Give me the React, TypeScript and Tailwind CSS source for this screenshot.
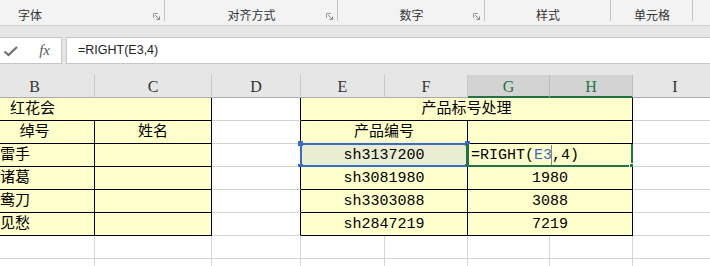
import React from 'react';

const R = { k: 'border-r-black', g: 'border-r-[#d4d4d4]' };
const B = { k: 'border-b-black', g: 'border-b-[#d4d4d4]' };

type Side = 'k' | 'g';

interface CellProps {
  span?: 1 | 2 | 4;
  r?: Side;
  b?: Side;
  fill?: string;
  align?: 'left' | 'center';
  className?: string;
  children?: React.ReactNode;
}

const SPAN = { 1: '', 2: 'col-span-2', 4: 'col-span-4' };

function Cell({ span = 1, r = 'g', b = 'g', fill = 'bg-white', align = 'center', className = '', children }: CellProps) {
  return (
    <div
      className={`relative h-[23px] box-border border-r border-b flex items-end pb-[1px] leading-[18px] whitespace-nowrap ${SPAN[span]} ${R[r]} ${B[b]} ${fill} ${
        align === 'center' ? 'justify-center' : 'justify-start'
      } ${className}`}
    >
      {children}
    </div>
  );
}

function Launcher() {
  return (
    <svg width="8" height="8" viewBox="0 0 8 8" className="absolute right-[4px] bottom-[4px]">
      <path d="M0.5 5 V0.5 H5" fill="none" stroke="#9a9a9a" strokeWidth="1" />
      <path d="M2 2 L6.5 6.5 M6.5 3.5 V6.5 H3.5" fill="none" stroke="#8a8a8a" strokeWidth="1" />
    </svg>
  );
}

function RibbonGroup({ label, width, launcher, className = '' }: { label: string; width: string; launcher?: boolean; className?: string }) {
  return (
    <div className={`relative h-full shrink-0 flex items-end pb-[3px] ${width} ${className}`}>
      <span className="text-[12px] leading-[14px] text-[#333]">{label}</span>
      {launcher && <Launcher />}
      <div className="absolute right-0 top-0 h-[21px] w-px bg-[#c4c4c4]" />
    </div>
  );
}

const names = ['雷手', '诸葛', '鸯刀', '见愁'];
const codes = ['sh3137200', 'sh3081980', 'sh3303088', 'sh2847219'];
const tails = ['', '1980', '3088', '7219'];

export default function App() {
  return (
    <div className="w-[710px] h-[266px] overflow-hidden bg-white font-['Noto_Sans_CJK_SC',sans-serif]">
      {/* ribbon labels */}
      <div className="h-[26px] bg-[#f3f3f3] border-b border-[#d2d2d2] flex">
        <RibbonGroup label="字体" width="w-[165px]" launcher className="pl-[18px]" />
        <RibbonGroup label="对齐方式" width="w-[173px]" launcher className="justify-center" />
        <RibbonGroup label="数字" width="w-[147px]" launcher className="justify-center" />
        <RibbonGroup label="样式" width="w-[126px]" className="justify-center" />
        <RibbonGroup label="单元格" width="w-[82px]" className="justify-center" />
      </div>

      {/* formula bar */}
      <div className="h-[49px] bg-[#e6e6e6] flex items-center">
        <div className="h-[27px] w-[62px] bg-white border-y border-r border-[#c6c6c6] flex items-center justify-between pl-[3px] pr-[11px]">
          <svg width="16" height="12" viewBox="0 0 16 12">
            <path d="M1.5 6.5 L5.5 10 L14 2" fill="none" stroke="#6e6e6e" strokeWidth="2.2" />
          </svg>
          <span className="italic font-['Liberation_Serif',serif] text-[15px] text-[#5a5a5a] leading-none">fx</span>
        </div>
        <div className="ml-[4px] h-[27px] flex-1 bg-white border-y border-l border-[#c6c6c6] flex items-center pl-[11px]">
          <span className="font-['Liberation_Sans',sans-serif] text-[12.5px] text-[#222]">=RIGHT(E3,4)</span>
        </div>
      </div>

      {/* sheet */}
      <div className="overflow-hidden">
        <div className="-ml-[25px] w-[742px] grid grid-cols-[120px_117px_89px_84px_83px_82px_83px_84px] font-['Liberation_Mono','Noto_Sans_CJK_SC',monospace] text-[15px] text-black">
          {/* column headers */}
          {['B', 'C', 'D', 'E', 'F'].map((c) => (
            <div
              key={c}
              className="h-[23px] box-border bg-[#e6e6e6] border-r border-r-[#c8c8c8] border-b border-b-[#ababab] flex items-center justify-center pt-[1px] font-['Liberation_Serif',serif] text-[16px] text-[#333]"
            >
              {c}
            </div>
          ))}
          {['G', 'H'].map((c) => (
            <div
              key={c}
              className="h-[23px] box-border bg-[#d3d3d3] border-r border-r-[#bdbdbd] border-b-2 border-b-[#217346] flex items-center justify-center pt-[2px] font-['Liberation_Serif',serif] text-[16px] text-[#217346]"
            >
              {c}
            </div>
          ))}
          <div className="h-[23px] box-border bg-[#e6e6e6] border-b border-b-[#ababab] flex items-center justify-center pt-[1px] font-['Liberation_Serif',serif] text-[16px] text-[#333]">
            I
          </div>

          {/* row 1 */}
          <Cell span={2} r="k" b="k" fill="bg-[#ffffcc]" align="left" className="pl-[35px]">红花会</Cell>
          <Cell r="k" />
          <Cell span={4} r="k" b="k" fill="bg-[#ffffcc]">产品标号处理</Cell>
          <Cell />

          {/* row 2 */}
          <Cell r="k" b="k" fill="bg-[#ffffcc]">绰号</Cell>
          <Cell r="k" b="k" fill="bg-[#ffffcc]">姓名</Cell>
          <Cell r="k" />
          <Cell span={2} r="k" b="k" fill="bg-[#ffffcc]">产品编号</Cell>
          <Cell span={2} r="k" b="k" fill="bg-[#ffffcc]" />
          <Cell />

          {/* rows 3-6 */}
          {names.map((n, i) => (
            <React.Fragment key={n}>
              <Cell r="k" b="k" fill="bg-[#ffffcc]" align="left" className="pl-[25px]">{n}</Cell>
              <Cell r="k" b="k" fill="bg-[#ffffcc]" />
              <Cell r="k" />
              <Cell span={2} r="k" b="k" fill={i === 0 ? 'bg-[#e9eed3]' : 'bg-[#ffffcc]'}>
                {codes[i]}
                {i === 0 && (
                  <>
                    <div className="absolute -left-px -top-px -right-px -bottom-px border-2 border-[#3b6cc4]" />
                    <div className="absolute -left-[3px] -top-[3px] w-[5px] h-[5px] bg-[#3b6cc4]" />
                    <div className="absolute -left-[3px] -bottom-[3px] w-[5px] h-[5px] bg-[#3b6cc4]" />
                    <div className="absolute -right-[3px] -top-[3px] w-[5px] h-[5px] bg-[#3b6cc4]" />
                    <div className="absolute -right-[3px] -bottom-[3px] w-[5px] h-[5px] bg-[#3b6cc4]" />
                  </>
                )}
              </Cell>
              {i === 0 ? (
                <Cell span={2} r="k" b="k" fill="bg-[#ffffcc]" align="left" className="pl-[3px]">
                  <span>=RIGHT(</span>
                  <span className="text-[#3b6cc4]">E3</span>
                  <span className="relative">
                    <span className="absolute -left-[1px] -top-[2px] h-[20px] w-px bg-[#888]" />,4)
                  </span>
                  <div className="absolute -left-[2px] top-0 -right-px -bottom-px border-l-[3px] border-r-[2px] border-b-2 border-[#217346]" />
                  <div className="absolute -right-[3px] -bottom-[3px] w-[6px] h-[6px] bg-[#217346] border border-white" />
                </Cell>
              ) : (
                <Cell span={2} r="k" b="k" fill="bg-[#ffffcc]">{tails[i]}</Cell>
              )}
              <Cell />
            </React.Fragment>
          ))}

          {/* rows 7-8 */}
          {[0, 1].map((row) => (
            <React.Fragment key={row}>
              <Cell />
              <Cell />
              <Cell />
              <Cell />
              <Cell />
              <Cell />
              <Cell />
              <Cell />
            </React.Fragment>
          ))}
        </div>
      </div>
    </div>
  );
}
